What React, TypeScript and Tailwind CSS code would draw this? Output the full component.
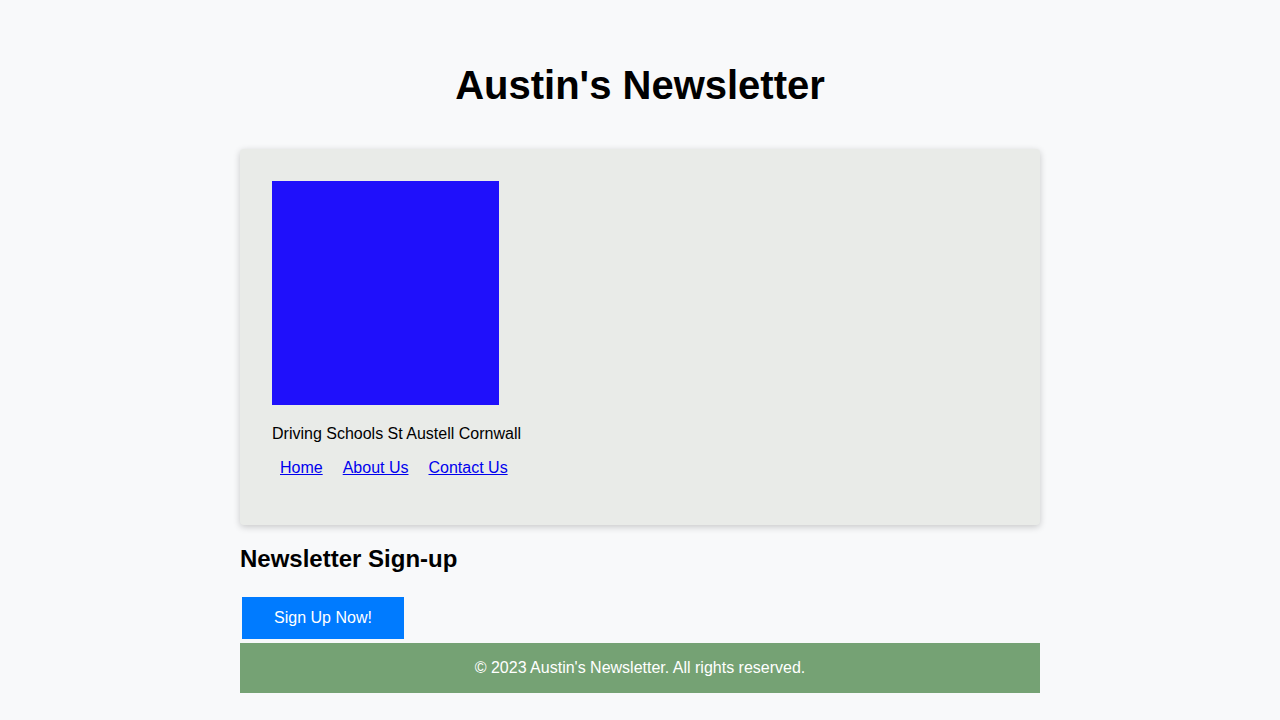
export default function App() {
  return (
    <div className="min-h-screen w-full bg-[#f8f9fa] font-['Liberation_Sans',Arial,sans-serif] text-black">
      <div className="mx-auto w-[800px] pt-[58px]">
        <h1 className="h-[55px] text-center text-[40px] font-bold leading-[55px]">
          Austin's Newsletter
        </h1>

        <div className="mt-[36px] rounded-[4px] bg-[#e9ebe8] px-8 pb-[48px] pt-8 shadow-[0_2px_7px_rgba(0,0,0,0.2)]">
          <div className="h-[224px] w-[227px] bg-[#1f10fb]" />
          <p className="mt-[20px] text-[16px] leading-[18px]">
            Driving Schools St Austell Cornwall
          </p>
          <ul className="mt-4 flex gap-[20px] pl-2 text-[16px] leading-[18px]">
            <li>
              <a href="#" className="text-[#0000ee] underline">Home</a>
            </li>
            <li>
              <a href="#" className="text-[#0000ee] underline">About Us</a>
            </li>
            <li>
              <a href="#" className="text-[#0000ee] underline">Contact Us</a>
            </li>
          </ul>
        </div>

        <h2 className="mt-[20px] text-[24px] font-bold leading-[28px]">
          Newsletter Sign-up
        </h2>
        <button className="ml-[2px] mt-[24px] h-[42px] w-[162px] bg-[#007bff] text-[16px] text-white">
          Sign Up Now!
        </button>
        <footer className="mt-[4px] flex h-[50px] items-center justify-center bg-[#75a274] text-[16px] text-white">
          © 2023 Austin's Newsletter. All rights reserved.
        </footer>
      </div>
    </div>
  );
}
